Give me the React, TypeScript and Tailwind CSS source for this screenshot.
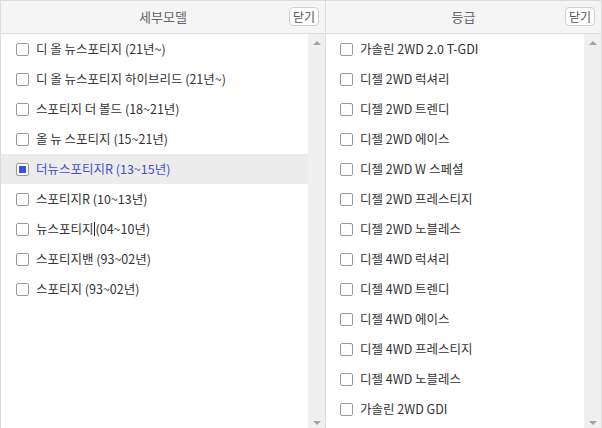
import React from 'react';

const font = { fontFamily: '"Noto Sans CJK KR", "Noto Sans", sans-serif' };

const models = [
  '디 올 뉴스포티지 (21년~)',
  '디 올 뉴스포티지 하이브리드 (21년~)',
  '스포티지 더 볼드 (18~21년)',
  '올 뉴 스포티지 (15~21년)',
  '더뉴스포티지R (13~15년)',
  '스포티지R (10~13년)',
  '뉴스포티지(04~10년)',
  '스포티지밴 (93~02년)',
  '스포티지 (93~02년)',
];

const grades = [
  '가솔린 2WD 2.0 T-GDI',
  '디젤 2WD 럭셔리',
  '디젤 2WD 트렌디',
  '디젤 2WD 에이스',
  '디젤 2WD W 스페셜',
  '디젤 2WD 프레스티지',
  '디젤 2WD 노블레스',
  '디젤 4WD 럭셔리',
  '디젤 4WD 트렌디',
  '디젤 4WD 에이스',
  '디젤 4WD 프레스티지',
  '디젤 4WD 노블레스',
  '가솔린 2WD GDI',
];

const Checkbox = ({ checked }: { checked?: boolean }) => (
  <span className="flex h-[13px] w-[13px] shrink-0 items-center justify-center rounded-[2px] border border-[#9a9a9a] bg-white">
    {checked && <span className="h-[7px] w-[7px] bg-[#3d4fe0]" />}
  </span>
);

const Scrollbar = () => (
  <div className="flex w-[17px] shrink-0 flex-col items-center justify-between bg-[#f0f0f0] pt-[7px] pb-[3px]">
    <span className="h-0 w-0 border-x-[4px] border-b-[4px] border-x-transparent border-b-[#a3a3a3]" />
    <span className="h-0 w-0 border-x-[4px] border-t-[4px] border-x-transparent border-t-[#a3a3a3]" />
  </div>
);

const Panel = ({
  title,
  items,
  selected,
  className,
  checkPad,
}: {
  title: string;
  items: string[];
  selected?: number;
  className: string;
  checkPad: string;
}) => (
  <div className={`flex h-full flex-col ${className}`}>
    <div className="relative flex h-[33px] shrink-0 items-center justify-center border-b border-[#dcdcdc] bg-[#f5f5f5]">
      <span className="text-[13px] text-[#666]">{title}</span>
      <button className="absolute right-[6px] top-[6px] flex h-[19px] items-center rounded-[4px] border border-[#d0d0d0] bg-white px-[3px] text-[12px] leading-none text-[#555]">
        닫기
      </button>
    </div>
    <div className="flex min-h-0 flex-1">
      <div className="flex-1 overflow-hidden bg-white">
        {items.map((item, i) => (
          <div
            key={item}
            className={`flex h-[30px] items-center gap-[7px] ${checkPad} text-[12.5px] ${
              i === selected ? 'bg-[#ececec] text-[#3d4fd0]' : 'text-[#333]'
            }`}
          >
            <Checkbox checked={i === selected} />
            <span className="whitespace-nowrap">
              {item === '뉴스포티지(04~10년)' ? (
                <>
                  뉴스포티지<span className="mx-[0.5px] inline-block h-[14px] w-px translate-y-[2px] bg-[#222]" />
                  (04~10년)
                </>
              ) : (
                item
              )}
            </span>
          </div>
        ))}
      </div>
      <Scrollbar />
    </div>
  </div>
);

export default function App() {
  return (
    <div className="flex h-[428px] w-[602px] overflow-hidden border-t border-[#dcdcdc] bg-white" style={font}>
      <Panel
        title="세부모델"
        items={models}
        selected={4}
        className="w-[326px] border-l border-r border-[#dcdcdc]"
        checkPad="pl-[15px]"
      />
      <Panel
        title="등급"
        items={grades}
        className="w-[276px] border-r border-[#dcdcdc]"
        checkPad="pl-[14px]"
      />
    </div>
  );
}
